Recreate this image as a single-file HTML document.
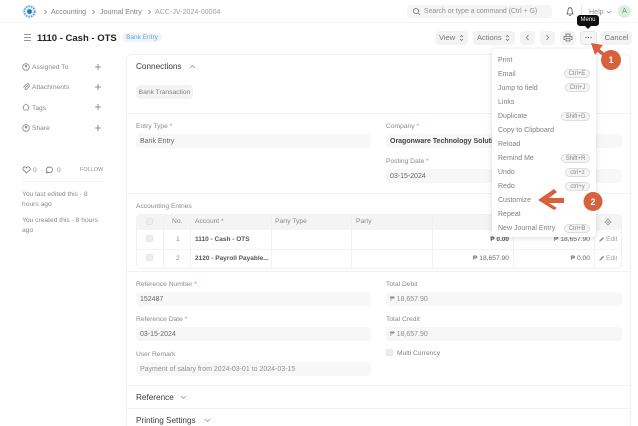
<!DOCTYPE html>
<html><head><meta charset="utf-8">
<style>
html,body{margin:0;padding:0;background:#fff}
#p{position:relative;width:638px;height:426px;overflow:hidden;background:#fff;font-family:"Liberation Sans",sans-serif;font-size:7px;color:#7c7c7c}
#p div{position:absolute;white-space:nowrap}
.t{line-height:10px;margin-top:1px}
.in{background:#f7f7f7;border-radius:4px;height:14px;line-height:15px;padding-left:4px;box-sizing:border-box;color:#666}
.btn{background:#f3f3f3;border-radius:4px;height:14px;top:31px;line-height:14px;text-align:center;color:#777;font-size:7.5px}
.r{color:#e0685a}
.hl{height:1px;background:#f2f2f2}
.vl{width:1px;background:#f1f1f1}
.cb{width:7px;height:7px;background:#eee;border:1px solid #e4e4e4;border-radius:2px;box-sizing:border-box}
.mi{left:498px;color:#808080;line-height:10px;margin-top:1px}
.kb{background:#f5f5f5;border:1px solid #ddd;border-radius:5px;height:9px;line-height:8px;font-size:6px;text-align:center;color:#888;box-sizing:border-box}
.sd{left:32px;color:#888;line-height:10px;font-size:6.7px;margin-top:1px}
.lb{font-size:6.7px;color:#8a8a8a;line-height:10px;margin-top:1px}
.b{color:#555;font-weight:bold;font-size:6.5px;line-height:10px;margin-top:1px}
.n{color:#666;font-size:6.7px;line-height:10px;margin-top:1px}
.sec{font-size:8.2px;color:#3a3a3a;line-height:11px;margin-top:1px}
</style></head><body>
<div id="p">
<!-- navbar -->
<div class="hl" style="left:0;top:22px;width:638px;background:#f6f6f6"></div>
<svg style="position:absolute;left:22px;top:4px" width="15" height="15" viewBox="0 0 15 15">
<circle cx="7.5" cy="7.5" r="7" fill="#e3eff8"/><circle cx="7.5" cy="7.5" r="5.2" fill="none" stroke="#4f9bd1" stroke-width="1.6" stroke-dasharray="1.4 1.2"/><circle cx="7.5" cy="7.5" r="2.4" fill="#1f78b8"/></svg>
<svg style="position:absolute;left:43px;top:9px" width="5" height="6"><path d="M1.500 1l2 2-2 2" fill="none" stroke="#888" stroke-width=".8"/></svg>
<div class="t" style="left:51px;top:6px;font-size:7.1px;color:#808080">Accounting</div>
<svg style="position:absolute;left:91px;top:9px" width="5" height="6"><path d="M1.500 1l2 2-2 2" fill="none" stroke="#888" stroke-width=".8"/></svg>
<div class="t" style="left:100px;top:6px;font-size:7.1px;color:#808080">Journal Entry</div>
<svg style="position:absolute;left:147px;top:9px" width="5" height="6"><path d="M1.500 1l2 2-2 2" fill="none" stroke="#888" stroke-width=".8"/></svg>
<div class="t" style="left:155px;top:6px;font-size:7.1px;color:#a0a0a0">ACC-JV-2024-00004</div>
<div style="left:407px;top:5px;width:145px;height:13px;background:#f5f5f5;border-radius:4px"></div>
<svg style="position:absolute;left:412px;top:7px" width="9" height="9"><circle cx="4" cy="4" r="2.6" fill="none" stroke="#777" stroke-width=".8"/><path d="M6 6l2 2" stroke="#777" stroke-width=".8"/></svg>
<div class="t" style="left:424px;top:6px;font-size:6.9px;color:#909090">Search or type a command (Ctrl + G)</div>
<svg style="position:absolute;left:565px;top:6px" width="10" height="11"><path d="M2 8c1-1 .8-2 1-4 .2-1.500 1-2.300 2-2.300s1.800.8 2 2.300c.2 2 0 3 1 4z M4 9.500h2" fill="none" stroke="#555" stroke-width=".8"/></svg>
<div style="left:581px;top:5px;width:1px;height:13px;background:#e8e8e8"></div>
<div class="t" style="left:589px;top:6px;font-size:7.1px;color:#909090">Help</div>
<svg style="position:absolute;left:606px;top:10px" width="6" height="5"><path d="M1 1l2 2 2-2" fill="none" stroke="#888" stroke-width=".7"/></svg>
<div style="left:618px;top:5px;width:13px;height:13px;border-radius:50%;background:#d9efdf;color:#4f9a68;text-align:center;line-height:14px;font-size:7px">A</div>
<!-- title row -->
<svg style="position:absolute;left:23px;top:33px" width="9" height="9"><path d="M1 1.500h7M1 4.500h7M1 7.500h7" stroke="#777" stroke-width=".8"/></svg>
<div style="left:37px;top:32px;font-size:9.5px;font-weight:bold;color:#222;line-height:13px">1110 - Cash - OTS</div>
<div style="left:122px;top:33px;width:40px;height:9px;border-radius:5px;background:#edf5fc;color:#6f9cd6;font-size:6.5px;line-height:10px;text-align:center">Bank Entry</div>
<div class="btn" style="left:435px;width:33px;text-align:left;padding-left:4px;box-sizing:border-box">View</div>
<svg style="position:absolute;left:459px;top:34px" width="5" height="8"><path d="M1 3l1.500-1.500L4 3M1 5l1.500 1.500L4 5" fill="none" stroke="#666" stroke-width=".7"/></svg>
<div class="btn" style="left:473px;width:42px;text-align:left;padding-left:4px;box-sizing:border-box">Actions</div>
<svg style="position:absolute;left:505px;top:34px" width="5" height="8"><path d="M1 3l1.500-1.500L4 3M1 5l1.500 1.500L4 5" fill="none" stroke="#666" stroke-width=".7"/></svg>
<div class="btn" style="left:520px;width:15px"></div>
<svg style="position:absolute;left:525px;top:34px" width="5" height="7"><path d="M3.500 1L1.500 3.500l2 2.500" fill="none" stroke="#777" stroke-width=".8"/></svg>
<div class="btn" style="left:540px;width:15px"></div>
<svg style="position:absolute;left:545px;top:34px" width="5" height="7"><path d="M1.500 1l2 2.500L1.500 6" fill="none" stroke="#777" stroke-width=".8"/></svg>
<div class="btn" style="left:560px;width:16px"></div>
<svg style="position:absolute;left:563px;top:33px" width="10" height="9"><path d="M3 3V1h4v2M2 6.500H1V3.500h8v3H8M3 5.500h4v2.500H3z" fill="none" stroke="#666" stroke-width=".8"/></svg>
<div class="btn" style="left:580px;width:17px;background:#f5f5f5;border:1px solid #e4e4e4;box-sizing:border-box"></div>
<svg style="position:absolute;left:585px;top:36px" width="8" height="3"><circle cx="1" cy="1.500" r=".6" fill="#555"/><circle cx="3.500" cy="1.500" r=".6" fill="#555"/><circle cx="6" cy="1.500" r=".6" fill="#555"/></svg>
<div class="btn" style="left:601px;width:31px;font-size:7.7px">Cancel</div>
<!-- card -->
<div style="left:126px;top:54px;width:505px;height:380px;border:1px solid #f0f0f0;border-radius:6px;box-sizing:border-box"></div>
<div class="sec" style="left:136px;top:60px">Connections</div>
<svg style="position:absolute;left:189px;top:64px" width="7" height="5"><path d="M1 4l2.500-2.500L6 4" fill="none" stroke="#888" stroke-width=".7"/></svg>
<div style="left:136px;top:85px;width:57px;height:14px;background:#f3f3f3;border-radius:4px;font-size:6.7px;line-height:15px;text-align:center;color:#808080">Bank Transaction</div>
<div class="hl" style="left:127px;top:113px;width:503px"></div>
<div class="lb" style="left:136px;top:121px">Entry Type <span class="r">*</span></div>
<div class="in" style="left:136px;top:134px;width:235px;font-size:7px">Bank Entry</div>
<div class="lb" style="left:386px;top:121px">Company <span class="r">*</span></div>
<div class="in" style="left:386px;top:134px;width:236px;font-size:7px;color:#444;font-weight:bold">Oragonware Technology Solutions</div>
<div class="lb" style="left:386px;top:156px">Posting Date <span class="r">*</span></div>
<div class="in" style="left:386px;top:169px;width:236px;font-size:7px">03-15-2024</div>
<div class="hl" style="left:127px;top:193px;width:503px"></div>
<div class="lb" style="left:136px;top:201px">Accounting Entries</div>
<!-- table -->
<div style="left:136px;top:214px;width:486px;height:16px;background:#f4f4f4;border-radius:5px 5px 0 0"></div>
<div style="left:136px;top:214px;width:486px;height:55px;border:1px solid #f1f1f1;border-radius:5px;box-sizing:border-box"></div>
<div class="hl" style="left:136px;top:249px;width:486px"></div>
<div class="vl" style="left:163px;top:214px;height:54px"></div>
<div class="vl" style="left:190px;top:214px;height:54px"></div>
<div class="vl" style="left:271px;top:214px;height:54px"></div>
<div class="vl" style="left:351px;top:214px;height:54px"></div>
<div class="vl" style="left:432px;top:214px;height:54px"></div>
<div class="vl" style="left:513px;top:214px;height:54px"></div>
<div class="vl" style="left:594px;top:214px;height:54px"></div>
<div class="cb" style="left:146px;top:218px"></div>
<div class="cb" style="left:146px;top:235px"></div>
<div class="cb" style="left:146px;top:254px"></div>
<div class="lb" style="left:172px;top:216px">No.</div>
<div class="lb" style="left:195px;top:216px">Account <span class="r">*</span></div>
<div class="lb" style="left:275px;top:216px">Party Type</div>
<div class="lb" style="left:356px;top:216px">Party</div>
<div class="lb" style="left:176px;top:234px">1</div>
<div class="lb" style="left:176px;top:253px">2</div>
<div class="b" style="left:195px;top:234px">1110 - Cash - OTS</div>
<div class="b" style="left:195px;top:253px">2120 - Payroll Payable...</div>
<div class="b" style="right:129px;top:234px">₱ 0.00</div>
<div class="n" style="right:129px;top:253px">₱ 18,657.90</div>
<div class="n" style="right:48px;top:234px">₱ 18,657.90</div>
<div class="n" style="right:48px;top:253px">₱ 0.00</div>
<div class="lb" style="left:606px;top:234px;color:#a0a0a0">Edit</div>
<div class="lb" style="left:606px;top:253px;color:#a0a0a0">Edit</div>
<svg style="position:absolute;left:598px;top:236px" width="7" height="7"><path d="M1 6l1-2 3-3 1 1-3 3z" fill="#888"/></svg>
<svg style="position:absolute;left:598px;top:255px" width="7" height="7"><path d="M1 6l1-2 3-3 1 1-3 3z" fill="#888"/></svg>
<svg style="position:absolute;left:604px;top:218px" width="8" height="8"><path d="M4 1l3 3-3 3-3-3z" fill="none" stroke="#999" stroke-width=".8"/><circle cx="4" cy="4" r="1" fill="none" stroke="#999" stroke-width=".6"/></svg>
<div class="hl" style="left:127px;top:271px;width:503px"></div>
<!-- refs -->
<div class="lb" style="left:136px;top:279px">Reference Number <span class="r">*</span></div>
<div class="in" style="left:136px;top:292px;width:235px">152487</div>
<div class="lb" style="left:136px;top:314px">Reference Date <span class="r">*</span></div>
<div class="in" style="left:136px;top:327px;width:235px">03-15-2024</div>
<div class="lb" style="left:136px;top:349px">User Remark</div>
<div class="in" style="left:136px;top:362px;width:235px;color:#909090">Payment of salary from 2024-03-01 to 2024-03-15</div>
<div class="lb" style="left:386px;top:279px">Total Debit</div>
<div class="in" style="left:386px;top:292px;width:236px;color:#909090">₱ 18,657.90</div>
<div class="lb" style="left:386px;top:314px">Total Credit</div>
<div class="in" style="left:386px;top:327px;width:236px;color:#909090">₱ 18,657.90</div>
<div class="cb" style="left:386px;top:349px"></div>
<div class="lb" style="left:397px;top:348px;color:#808080">Multi Currency</div>
<div class="hl" style="left:127px;top:385px;width:503px"></div>
<div class="sec" style="left:136px;top:391px">Reference</div>
<svg style="position:absolute;left:180px;top:395px" width="7" height="5"><path d="M1 1l2.500 2.500L6 1" fill="none" stroke="#888" stroke-width=".7"/></svg>
<div class="hl" style="left:127px;top:408px;width:503px"></div>
<div class="sec" style="left:136px;top:414px">Printing Settings</div>
<svg style="position:absolute;left:204px;top:418px" width="7" height="5"><path d="M1 1l2.500 2.500L6 1" fill="none" stroke="#888" stroke-width=".7"/></svg>
<!-- sidebar -->
<svg style="position:absolute;left:22px;top:63px" width="8" height="8"><circle cx="4" cy="4" r="3.300" fill="none" stroke="#888" stroke-width=".8"/><circle cx="4" cy="3.200" r="1.200" fill="#888"/></svg>
<div class="sd" style="top:62px">Assigned To</div>
<svg style="position:absolute;left:22px;top:83px" width="8" height="8"><path d="M6 2L3 5.500a1 1 0 0 0 1.500 1L7 3.500A1.800 1.800 0 0 0 4 1.500L1.500 4.500" fill="none" stroke="#888" stroke-width=".8"/></svg>
<div class="sd" style="top:82px">Attachments</div>
<svg style="position:absolute;left:22px;top:103px" width="8" height="8"><path d="M4 1l3 2.500-1 3.500H2L1 3.500z" fill="none" stroke="#888" stroke-width=".8"/></svg>
<div class="sd" style="top:103px">Tags</div>
<svg style="position:absolute;left:22px;top:124px" width="8" height="8"><circle cx="4" cy="4" r="3.300" fill="none" stroke="#888" stroke-width=".8"/><circle cx="4" cy="3.200" r="1.200" fill="#888"/></svg>
<div class="sd" style="top:123px">Share</div>
<svg style="position:absolute;left:94px;top:63px" width="8" height="8"><path d="M4 1v6M1 4h6" stroke="#777" stroke-width=".8"/></svg>
<svg style="position:absolute;left:94px;top:83px" width="8" height="8"><path d="M4 1v6M1 4h6" stroke="#777" stroke-width=".8"/></svg>
<svg style="position:absolute;left:94px;top:103px" width="8" height="8"><path d="M4 1v6M1 4h6" stroke="#777" stroke-width=".8"/></svg>
<svg style="position:absolute;left:94px;top:124px" width="8" height="8"><path d="M4 1v6M1 4h6" stroke="#777" stroke-width=".8"/></svg>
<svg style="position:absolute;left:22px;top:166px" width="9" height="8"><path d="M4.500 7L1 3.500a1.700 1.700 0 0 1 3.500-1.500A1.700 1.700 0 0 1 8 3.500z" fill="none" stroke="#666" stroke-width=".7"/></svg>
<div class="sd" style="left:33px;top:165px">0</div>
<div class="sd" style="left:41px;top:165px">·</div>
<svg style="position:absolute;left:45px;top:166px" width="9" height="8"><path d="M4.500 1a3 2.800 0 1 1-1.500 5.200L1.500 7l.5-1.500A3 2.800 0 0 1 4.500 1z" fill="none" stroke="#666" stroke-width=".7"/></svg>
<div class="sd" style="left:57px;top:165px">0</div>
<div style="left:80px;top:165px;font-size:5.500px;line-height:11px;color:#909090">FOLLOW</div>
<div class="hl" style="left:22px;top:181px;width:83px;background:#f3f3f3"></div>
<div class="lb" style="left:22px;top:189px">You last edited this · 8</div>
<div class="lb" style="left:22px;top:199px">hours ago</div>
<div class="lb" style="left:22px;top:215px">You created this · 8 hours</div>
<div class="lb" style="left:22px;top:225px">ago</div>
<!-- dropdown -->
<div style="left:492px;top:49px;width:104px;height:188px;background:#fff;border-radius:4px;box-shadow:0 1px 6px rgba(0,0,0,.14)"></div>
<div class="mi" style="top:55px">Print</div>
<div class="mi" style="top:69px">Email</div>
<div class="kb" style="left:564px;top:69px;width:26px">Ctrl+E</div>
<div class="mi" style="top:83px">Jump to field</div>
<div class="kb" style="left:565px;top:83px;width:25px">Ctrl+J</div>
<div class="mi" style="top:97px">Links</div>
<div class="mi" style="top:111px">Duplicate</div>
<div class="kb" style="left:561px;top:112px;width:29px">Shift+D</div>
<div class="mi" style="top:125px">Copy to Clipboard</div>
<div class="mi" style="top:139px">Reload</div>
<div class="mi" style="top:153px">Remind Me</div>
<div class="kb" style="left:561px;top:154px;width:29px">Shift+R</div>
<div class="mi" style="top:167px">Undo</div>
<div class="kb" style="left:565px;top:168px;width:25px">ctrl+z</div>
<div class="mi" style="top:181px">Redo</div>
<div class="kb" style="left:565px;top:182px;width:25px">ctrl+y</div>
<div class="mi" style="top:195px">Customize</div>
<div class="mi" style="top:209px">Repeat</div>
<div class="mi" style="top:223px">New Journal Entry</div>
<div class="kb" style="left:564px;top:224px;width:26px">Ctrl+B</div>
<!-- tooltip -->
<div style="left:577px;top:15px;width:22px;height:11px;background:#111;border-radius:3px;color:#eee;font-size:6px;line-height:11px;text-align:center">Menu</div>
<div style="left:585px;top:26px;width:0;height:0;border:3px solid transparent;border-top-color:#111"></div>
<!-- annotations -->
<svg style="position:absolute;left:585px;top:40px" width="40" height="32" viewBox="0 0 40 32"><path d="M9 7L22 17" stroke="#d8603c" stroke-width="3.600" fill="none"/><path d="M6 3l12 2-8 10z" fill="#d8603c"/><circle cx="26" cy="20" r="10" fill="#d8603c"/></svg>
<div style="left:603px;top:52px;width:16px;text-align:center;color:#fff;font-weight:bold;font-size:9px;line-height:16px">1</div>
<svg style="position:absolute;left:536px;top:188px" width="70" height="24" viewBox="0 0 70 24"><path d="M2 12L18 1l3 3-8 6h15v5H13l8 5-3 2z" fill="#d8603c"/><circle cx="57" cy="13.500" r="9.500" fill="#d8603c"/></svg>
<div style="left:585px;top:193.500px;width:16px;text-align:center;color:#fff;font-weight:bold;font-size:9px;line-height:16px">2</div>
</div>
</body></html>
